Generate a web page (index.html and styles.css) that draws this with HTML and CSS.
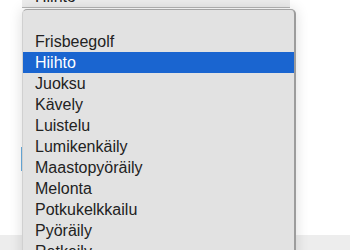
FILE: index.html
```html
<!DOCTYPE html>
<html>
<head>
<meta charset="utf-8">
<link rel="stylesheet" href="styles.css">
</head>
<body>
<div class="page">
  <div class="select"><span class="select-text">Hiihto</span></div>
  <div class="spacer"></div>
  <div class="field"></div>
  <div class="spacer2"></div>
  <div class="footer"></div>
  <ul class="menu">
    <li class="opt">&nbsp;</li>
    <li class="opt">Frisbeegolf</li>
    <li class="opt sel">Hiihto</li>
    <li class="opt">Juoksu</li>
    <li class="opt">Kävely</li>
    <li class="opt">Luistelu</li>
    <li class="opt">Lumikenkäily</li>
    <li class="opt">Maastopyöräily</li>
    <li class="opt">Melonta</li>
    <li class="opt">Potkukelkkailu</li>
    <li class="opt">Pyöräily</li>
    <li class="opt">Retkeily</li>
  </ul>
</div>
</body>
</html>
```
FILE: styles.css
```css
html, body {
  margin: 0;
  padding: 0;
  background: #ffffff;
  font-family: "Liberation Sans", Arial, sans-serif;
  overflow: hidden;
}
.page {
  position: relative;
  width: 350px;
  height: 250px;
  display: flex;
  flex-direction: column;
}
.select {
  margin-left: 22px;
  width: 268px;
  height: 8px;
  overflow: hidden;
  background: #ececec;
  border-bottom: 1px solid #b5b5b5;
  padding: 0 13px;
  box-sizing: border-box;
  color: #222;
  font-size: 16px;
}
.select-text {
  display: block;
  line-height: 18px;
  margin-top: -12px;
}
.spacer {
  height: 139px;
}
.field {
  margin-left: 21px;
  width: 10px;
  height: 24px;
  border-left: 1px solid #6aaee0;
  box-sizing: border-box;
}
.spacer2 {
  height: 64px;
}
.footer {
  flex: 1;
  background: #ededed;
}
.menu {
  position: absolute;
  left: 22px;
  top: 9px;
  width: 274px;
  height: 260px;
  margin: 0;
  padding: 0;
  list-style: none;
  background: #e2e2e2;
  border-top: 1px solid #a3a3a3;
  border-right: 2px solid #9c9c9c;
  border-left: 1px solid #d0d0d0;
  border-radius: 5px 5px 0 0;
  box-sizing: border-box;
  box-shadow: 0 0 14px rgba(0, 0, 0, 0.14);
  font-size: 16px;
  color: #222;
}
.opt {
  height: 21px;
  line-height: 21px;
  padding-left: 12px;
  white-space: nowrap;
}
.opt.sel {
  background: #1a65d0;
  color: #ffffff;
}
```
